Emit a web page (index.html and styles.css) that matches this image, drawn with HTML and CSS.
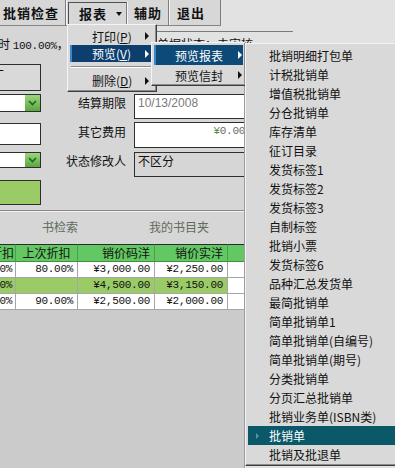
FILE: index.html
```html
<!DOCTYPE html>
<html lang="zh-CN">
<head>
    <meta charset="UTF-8">
    <title>批销单</title>
    <link rel="stylesheet" href="styles.css">
</head>
<body>
    <div class="window">
        <div class="top">
            <div class="toolbar">
                <div class="tb-btn tb-check">批销检查</div>
                <div class="tb-btn tb-report">报表<span class="drop"></span></div>
                <div class="tb-btn tb-help">辅助</div>
                <div class="tb-btn tb-exit">退出</div>
            </div>
            <div class="top-fill"></div>
        </div>

        <div class="info">
            <div class="info-left">时 <span class="num">100.00%</span>，</div>
            <div class="info-right"><span class="status">单据状态：未审核</span></div>
        </div>

        <div class="main">
            <div class="panel">
                <div class="form">
                    <div class="box box-a"><span class="cut">丁</span></div>
                    <div class="label"></div>
                    <div></div>

                    <div class="box box-combo">
                        <span class="combo-btn"><svg width="9" height="6" viewBox="0 0 9 6"><path d="M1 1 L4.5 4.5 L8 1" fill="none" stroke="#24602a" stroke-width="1.6"/></svg></span>
                    </div>
                    <div class="label">结算期限</div>
                    <div class="field field-date">10/13/2008</div>

                    <div class="box box-text"></div>
                    <div class="label">其它费用</div>
                    <div class="field field-money"><span class="yen">¥</span>0.00</div>

                    <div class="box box-combo short">
                        <span class="combo-btn"><svg width="9" height="6" viewBox="0 0 9 6"><path d="M1 1 L4.5 4.5 L8 1" fill="none" stroke="#24602a" stroke-width="1.6"/></svg></span>
                    </div>
                    <div class="label">状态修改人</div>
                    <div class="field field-grey">不区分</div>

                    <div class="box box-green"></div>
                    <div></div>
                    <div></div>
                </div>

                <div class="divider"></div>

                <div class="tabs">
                    <span>书检索</span>
                    <span>我的书目夹</span>
                </div>

                <table class="grid">
                    <colgroup>
                        <col class="c0"><col class="c1"><col class="c2"><col class="c3"><col class="c4">
                    </colgroup>
                    <tr>
                        <th class="first">本次折扣</th>
                        <th class="center">上次折扣</th>
                        <th>销价码洋</th>
                        <th>销价实洋</th>
                        <th class="last"></th>
                    </tr>
                    <tr>
                        <td class="first">100.00%</td>
                        <td>80.00%</td>
                        <td>¥3,000.00</td>
                        <td>¥2,250.00</td>
                        <td class="last"></td>
                    </tr>
                    <tr class="alt">
                        <td class="first">100.00%</td>
                        <td></td>
                        <td>¥4,500.00</td>
                        <td>¥3,150.00</td>
                        <td class="last"></td>
                    </tr>
                    <tr>
                        <td class="first">100.00%</td>
                        <td>90.00%</td>
                        <td>¥2,500.00</td>
                        <td>¥2,000.00</td>
                        <td class="last"></td>
                    </tr>
                </table>

                <div class="empty"></div>
            </div>
            <div class="side"></div>
        </div>

        <!-- 报表 dropdown -->
        <div class="menu menu-main">
            <div class="mi mi-a"><span>打印(<u>P</u>)</span><span class="sub"></span></div>
            <div class="mi mi-b hot"><span>预览(<u>V</u>)</span><span class="sub"></span></div>
            <div class="sep"></div>
            <div class="mi"><span>删除(<u>D</u>)</span><span class="sub"></span></div>
        </div>

        <div class="menu menu-preview">
            <div class="mi hot"><span>预览报表</span><span class="sub"></span></div>
            <div class="mi"><span>预览信封</span><span class="sub"></span></div>
        </div>

        <div class="menu menu-reports">
            <div class="ri"><span class="mark"></span>批销明细打包单</div>
            <div class="ri"><span class="mark"></span>计税批销单</div>
            <div class="ri"><span class="mark"></span>增值税批销单</div>
            <div class="ri"><span class="mark"></span>分仓批销单</div>
            <div class="ri"><span class="mark"></span>库存清单</div>
            <div class="ri"><span class="mark"></span>征订目录</div>
            <div class="ri"><span class="mark"></span>发货标签1</div>
            <div class="ri"><span class="mark"></span>发货标签2</div>
            <div class="ri"><span class="mark"></span>发货标签3</div>
            <div class="ri"><span class="mark"></span>自制标签</div>
            <div class="ri"><span class="mark"></span>批销小票</div>
            <div class="ri"><span class="mark"></span>发货标签6</div>
            <div class="ri"><span class="mark"></span>品种汇总发货单</div>
            <div class="ri"><span class="mark"></span>最简批销单</div>
            <div class="ri"><span class="mark"></span>简单批销单1</div>
            <div class="ri"><span class="mark"></span>简单批销单(自编号)</div>
            <div class="ri"><span class="mark"></span>简单批销单(期号)</div>
            <div class="ri"><span class="mark"></span>分类批销单</div>
            <div class="ri"><span class="mark"></span>分页汇总批销单</div>
            <div class="ri"><span class="mark"></span>批销业务单(ISBN类)</div>
            <div class="ri sel"><span class="mark"></span>批销单</div>
            <div class="ri"><span class="mark"></span>批销及批退单</div>
        </div>
    </div>
</body>
</html>
```

FILE: styles.css
```css
body {
    margin: 0;
    font-family: "Noto Sans CJK SC", sans-serif;
    font-size: 12px;
    color: #111;
}

.window {
    position: relative;
    width: 395px;
    height: 468px;
    overflow: hidden;
    display: flex;
    flex-direction: column;
    background: #e1e1e1;
}

/* toolbar */
.top {
    display: flex;
    height: 26px;
    flex-shrink: 0;
}

.toolbar {
    display: flex;
    width: 221px;
    height: 25px;
    background: #d7d7d7;
    border-bottom: 1px solid #858585;
}

.top-fill {
    flex: 1;
    background: #e2e2e2;
}

.tb-btn {
    box-sizing: border-box;
    height: 25px;
    line-height: 25px;
    font-weight: bold;
    font-size: 13px;
    letter-spacing: 1px;
    white-space: nowrap;
    border-right: 1px solid #7c7c7c;
    box-shadow: 1px 0 0 #f6f6f6;
}

.tb-check {
    width: 66px;
    padding-left: 3px;
}

.tb-report {
    width: 59px;
    height: 23px;
    margin: 2px 0 0 2px;
    padding-left: 10px;
    line-height: 22px;
    border-top: 1px solid #505050;
    border-left: 1px solid #505050;
    display: flex;
    align-items: center;
}

.drop {
    display: inline-block;
    margin-left: 9px;
    border-top: 4px solid #111;
    border-left: 3px solid transparent;
    border-right: 3px solid transparent;
}

.tb-help {
    width: 42px;
    padding-left: 7px;
}

.tb-exit {
    width: 52px;
    padding-left: 8px;
}

/* info row */
.info {
    display: flex;
    height: 38px;
    flex-shrink: 0;
}

.info-left {
    box-sizing: border-box;
    width: 150px;
    background: #d6d6d6;
    padding-top: 11px;
    line-height: 14px;
    text-indent: -2px;
    white-space: nowrap;
}

.num {
    font-family: "Liberation Mono", monospace;
    font-size: 11px;
    letter-spacing: -0.3px;
}

.info-right {
    flex: 1;
    background: #e2e2e2;
    padding-top: 5px;
}

.info-right::before {
    content: "";
    display: block;
    width: 143px;
    border-top: 1px solid #7a7a7a;
}

.status {
    display: block;
    margin-top: 5px;
    padding-left: 7px;
    line-height: 14px;
    white-space: nowrap;
}

/* main panel */
.main {
    flex: 1;
    display: flex;
    min-height: 0;
}

.panel {
    width: 244px;
    display: flex;
    flex-direction: column;
    background: #d6d6d6;
    border-right: 1px solid #9c9c9c;
    overflow: hidden;
}

.side {
    flex: 1;
    background: #e2e2e2;
    border-left: 1px solid #f4f4f4;
}

.form {
    display: grid;
    grid-template-columns: 41px 93px 120px;
    grid-template-rows: 30px 29px 29px 28px 30px;
    flex-shrink: 0;
}

.box {
    box-sizing: border-box;
    width: 43px;
    margin-left: -2px;
    border: 1px solid #2e2e2e;
    background: #fff;
    display: flex;
    justify-content: flex-end;
    overflow: hidden;
}

.box-a {
    height: 27px;
    background: #d9d9d9;
    justify-content: flex-start;
}

.cut {
    margin-left: -7px;
    line-height: 20px;
}

.box-combo {
    height: 18px;
}

.box-combo.short {
    height: 16px;
}

.box-text {
    height: 22px;
}

.box-green {
    height: 25px;
    background: #9acb66;
}

.combo-btn {
    width: 15px;
    height: 100%;
    background: linear-gradient(#9ad67e, #5ca640);
    display: flex;
    align-items: center;
    justify-content: center;
}

.label {
    text-align: right;
    padding-right: 8px;
    line-height: 18px;
    white-space: nowrap;
}

.field {
    box-sizing: border-box;
    width: 118px;
    height: 25px;
    border: 1px solid #2e2e2e;
    background: #fff;
    padding: 1px 3px;
    line-height: 14px;
    white-space: nowrap;
}

.field-date {
    color: #7a7a7a;
    font-family: "Liberation Sans", sans-serif;
}

.field-money {
    height: 26px;
    margin-top: -1px;
    padding-right: 6px;
    text-align: right;
    color: #6a6a6a;
    font-family: "Liberation Mono", monospace;
    font-size: 11px;
    letter-spacing: -0.3px;
}

.yen {
    color: #5b8d4b;
}

.field-grey {
    background: #d6d6d6;
}

.divider {
    flex-shrink: 0;
    border-top: 1px solid #8a8a8a;
    border-bottom: 1px solid #f2f2f2;
}

.tabs {
    display: flex;
    gap: 71px;
    height: 32px;
    padding-left: 42px;
    line-height: 29px;
    color: #5f6b5c;
    flex-shrink: 0;
}

/* grid */
.grid {
    flex-shrink: 0;
    width: 315px;
    margin-left: -47px;
    table-layout: fixed;
    border-collapse: separate;
    border-spacing: 0;
    font-family: "Liberation Mono", monospace;
    font-size: 11px;
    letter-spacing: -0.3px;
}

.c0 { width: 63px; }
.c1 { width: 62px; }
.c2 { width: 77px; }
.c3 { width: 73px; }
.c4 { width: 40px; }

.grid th {
    background: #63c763;
    font-family: "Noto Sans CJK SC", sans-serif;
    font-size: 12px;
    font-weight: normal;
    letter-spacing: 0;
    line-height: 16px;
    padding: 0 4px;
    text-align: right;
    white-space: nowrap;
    overflow: hidden;
    border-top: 1px solid #2a2a2a;
    border-bottom: 1px solid #3f8f3f;
    border-right: 1px solid #4aa04a;
}

.grid th.center {
    text-align: center;
}

.grid th.first {
    padding-right: 1px;
}

.grid td {
    background: #fff;
    line-height: 15px;
    padding: 0 4px;
    text-align: right;
    white-space: nowrap;
    overflow: hidden;
    border-right: 1px solid #a6a6a6;
    border-bottom: 1px solid #a6a6a6;
}

.grid td.first {
    padding-right: 3px;
}

.grid .alt td {
    background: #9acb66;
}

.grid .alt td.last {
    background: #fff;
}

.empty {
    flex: 1;
    background: #cbcbcb;
}

/* popup menus */
.menu {
    position: absolute;
    box-sizing: border-box;
    background: #d9d9d9;
    border: 1px solid;
    border-color: #f4f4f4 #3c3c3c #3c3c3c #f4f4f4;
    box-shadow: inset -1px -1px 0 #8c8c8c;
    padding: 2px 2px 0;
}

.mi {
    display: flex;
    align-items: center;
    justify-content: space-between;
    height: 20px;
    white-space: nowrap;
}

.hot {
    background: #0c3e6e;
    color: #fff;
    box-shadow: inset 2px 0 0 #3b86c8;
}

.sub {
    width: 0;
    height: 0;
    border-left: 4px solid currentColor;
    border-top: 4px solid transparent;
    border-bottom: 4px solid transparent;
}

.menu-main {
    left: 67px;
    top: 24px;
    width: 90px;
    height: 68px;
}

.menu-main .mi {
    padding: 0 5px 0 22px;
}

.menu-main .mi-a {
    height: 18px;
}

.menu-main .mi-b {
    height: 17px;
}

.menu-main .mi:last-child {
    height: 19px;
}

.sep {
    height: 9px;
    display: flex;
    align-items: center;
}

.sep::after {
    content: "";
    flex: 1;
    margin: 0 1px;
    border-top: 1px solid #8a8a8a;
    border-bottom: 1px solid #fff;
}

.menu-preview {
    left: 151px;
    top: 42px;
    width: 95px;
    height: 44px;
}

.menu-preview .mi {
    padding: 0 1px 0 21px;
}

.menu-preview .hot {
    background: #0d4a78;
}

.menu-reports {
    left: 245px;
    top: 43px;
    width: 170px;
    height: 423px;
    padding: 2px 2px 1px;
}

.ri {
    display: flex;
    align-items: center;
    height: 19px;
    padding-left: 5px;
    white-space: nowrap;
}

.mark {
    width: 16px;
    display: flex;
    align-items: center;
}

.ri.sel {
    background: #0b5869;
    color: #fff;
}

.ri.sel .mark::before {
    content: "";
    margin-left: 3px;
    border-left: 3px solid #4a9cab;
    border-top: 3px solid transparent;
    border-bottom: 3px solid transparent;
}
```
